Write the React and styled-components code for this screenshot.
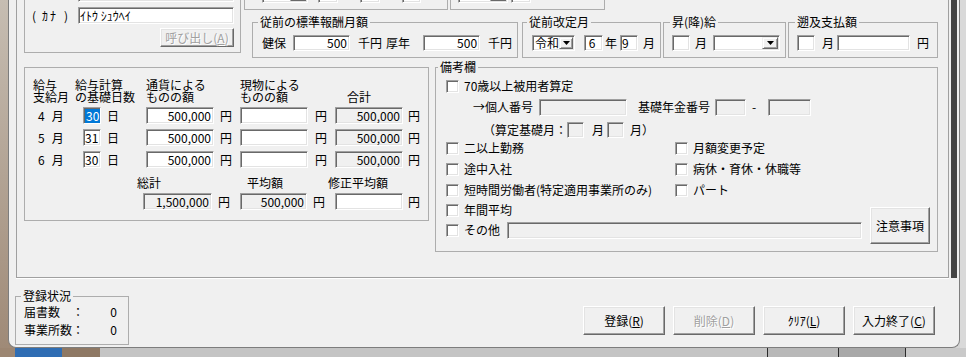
import React from "react";
import styled, { createGlobalStyle } from "styled-components";

const GlobalStyle = createGlobalStyle`
  html, body { margin: 0; padding: 0; }
  body {
    font-family: "Noto Sans CJK JP", "Noto Sans", sans-serif;
    font-size: 12px;
    color: #000;
    background: #d6d6d6;
    overflow: hidden;
  }
`;

const Screen = styled.div`
  width: 966px;
  height: 357px;
  overflow: hidden;
  display: flex;
  flex-direction: column;
`;
const Desk = styled.div`
  display: flex;
  height: 348px;
  flex-shrink: 0;
  background: linear-gradient(to right, #a08a76 0, #a08a76 480px, #d4d4d4 480px);
`;
const LeftDesk = styled.div`
  width: 8px;
  flex-shrink: 0;
  background: linear-gradient(to bottom, #c6bdb2, #9f8a77);
`;
const RightDesk = styled.div`
  flex: 1;
  background: #d9d9d9;
`;
const Taskbar = styled.div`
  display: flex;
  height: 9px;
`;
const Seg = styled.div`
  width: ${(p) => (p.$w ? p.$w + "px" : "auto")};
  flex: ${(p) => (p.$w ? "none" : "1")};
  background: ${(p) => p.$bg};
  border-left: ${(p) => (p.$line ? "1px solid #2a2a2a" : "none")};
`;

const Window = styled.div`
  box-sizing: border-box;
  width: 952px;
  height: 378px;
  margin-top: -30px;
  flex-shrink: 0;
  display: flex;
  flex-direction: column;
  background: #f0f0f0;
  border: 1px solid #7d7d7d;
  border-top: none;
  border-radius: 0 0 8px 8px;
  overflow: hidden;
`;
const Upper = styled.div`
  display: flex;
  height: 308px;
`;
const Panel = styled.div`
  box-sizing: border-box;
  margin-left: 7px;
  width: 933px;
  height: 308px;
  padding-left: 7px;
  border: 1px solid #a0a0a0;
  border-top: none;
  box-shadow: 0 1px 0 #fff;
  display: flex;
  flex-direction: column;
`;
const RightFrame = styled.div`
  width: 10px;
  display: flex;
`;
const DarkBar = styled.div`
  width: 6px;
  margin-left: 2px;
  background: #444;
`;

const GroupBox = styled.fieldset`
  box-sizing: border-box;
  margin: ${(p) => p.$mt || 0}px 0 0 ${(p) => p.$ml || 0}px;
  padding: 0;
  min-width: 0;
  width: ${(p) => p.$w}px;
  height: ${(p) => p.$h}px;
  border: 1px solid #adadad;
  flex-shrink: 0;
`;
const Legend = styled.legend`
  padding: 0 2px;
  margin-left: ${(p) => (p.$ml ?? 5)}px;
  font-size: 12px;
  line-height: 14px;
`;
const Body = styled.div`
  padding: ${(p) => p.$pad};
`;

const Row = styled.div`
  display: flex;
  align-items: center;
  justify-content: ${(p) => (p.$end ? "flex-end" : "flex-start")};
  height: ${(p) => (p.$h ? p.$h + "px" : "auto")};
  margin-top: ${(p) => p.$mt || 0}px;
  padding-left: ${(p) => p.$pl || 0}px;
  padding-right: ${(p) => (p.$end ? 1 : 0)}px;
`;
const Txt = styled.span`
  flex-shrink: 0;
  margin-left: ${(p) => p.$ml || 0}px;
  line-height: 14px;
  white-space: nowrap;
`;
const KanaLabel = styled.div`
  width: 36px;
  display: flex;
  justify-content: space-between;
  line-height: 14px;
  span:nth-child(2) { letter-spacing: 2px; }
`;

const Edit = styled.div`
  box-sizing: border-box;
  flex-shrink: 0;
  width: ${(p) => p.$w}px;
  height: ${(p) => p.$h || 17}px;
  margin-left: ${(p) => p.$ml || 0}px;
  padding: 0 2px 0 1px;
  border: 1px solid;
  border-color: #a0a0a0 #fff #fff #a0a0a0;
  box-shadow: inset 1px 1px 0 #696969, inset -1px -1px 0 #e3e3e3;
  background: ${(p) => (p.$ro ? "#f0f0f0" : "#fff")};
  display: flex;
  align-items: center;
  justify-content: ${(p) => (p.$right ? "flex-end" : "flex-start")};
  font-size: 12px;
  line-height: 12px;
  white-space: nowrap;
  overflow: hidden;
`;
const Combo = styled(Edit)`
  padding: 0 1px 0 2px;
  justify-content: space-between;
`;
const DropBtn = styled.div`
  box-sizing: border-box;
  width: 16px;
  height: ${(p) => p.$h || 13}px;
  border: 1px solid;
  border-color: #f0f0f0 #696969 #696969 #f0f0f0;
  box-shadow: inset 1px 1px 0 #fff, inset -1px -1px 0 #a0a0a0;
  background: #f0f0f0;
  display: flex;
  align-items: center;
  justify-content: center;
`;
const Sel = styled.span`
  background: #0078d7;
  color: #fff;
  padding: 1px 1px;
  border-right: 1px solid #000;
`;
const Box = styled.div`
  box-sizing: border-box;
  width: 13px;
  height: 13px;
  flex-shrink: 0;
  border: 1px solid;
  border-color: #a0a0a0 #fff #fff #a0a0a0;
  box-shadow: inset 1px 1px 0 #696969, inset -1px -1px 0 #e3e3e3;
  background: #fff;
`;
const Btn = styled.button`
  box-sizing: border-box;
  width: ${(p) => p.$w}px;
  height: ${(p) => p.$h}px;
  margin: ${(p) => p.$mt || 0}px 0 0 ${(p) => p.$ml || 0}px;
  padding: 0;
  flex-shrink: 0;
  border: 1px solid;
  border-color: #fff #696969 #696969 #fff;
  box-shadow: inset -1px -1px 0 #a0a0a0, inset 1px 1px 0 #e3e3e3;
  background: #f0f0f0;
  font-family: inherit;
  font-size: 12px;
  line-height: 14px;
  color: ${(p) => (p.$off ? "#a0a0a0" : "#000")};
  text-shadow: ${(p) => (p.$off ? "1px 1px 0 #fff" : "none")};
`;

const TopRow = styled.div`
  display: flex;
  align-items: flex-start;
  gap: 3px;
`;
const RightCol = styled.div`
  display: flex;
  flex-direction: column;
`;
const TopStrip = styled.div`
  display: flex;
  gap: 2px;
`;
const GroupsRow = styled.div`
  display: flex;
  margin-top: 5px;
`;
const MidRow = styled.div`
  display: flex;
  align-items: flex-start;
  margin-top: 2px;
`;

const SalaryGrid = styled.div`
  display: grid;
  grid-template-columns: 42px 71px 94px 95px 90px;
  align-items: center;
  height: ${(p) => p.$h}px;
  margin-top: ${(p) => p.$mt || 0}px;
`;
const Head = styled.div`
  line-height: 12px;
  padding-left: ${(p) => p.$pl || 0}px;
  align-self: end;
  white-space: nowrap;
`;
const Cell = styled.div`
  display: flex;
  align-items: center;
  padding-left: ${(p) => p.$pl || 0}px;
`;

const TwoCol = styled.div`
  display: grid;
  grid-template-columns: 229px auto;
  align-items: center;
  height: 18px;
  margin-top: ${(p) => p.$mt || 0}px;
`;
const CheckItem = styled.div`
  display: flex;
  align-items: center;
  height: 18px;
`;
const Tail = styled.div`
  display: flex;
  align-items: flex-start;
`;

const Footer = styled.div`
  display: flex;
  align-items: flex-start;
`;
const StatGrid = styled.div`
  display: grid;
  grid-template-columns: 48px 12px 33px;
  grid-auto-rows: 18px;
  align-items: center;
  padding-left: 8px;
  line-height: 14px;
  span:nth-child(3n) { text-align: right; }
`;
const ButtonBar = styled.div`
  display: flex;
  gap: 8px;
  margin: 28px 24px 0 auto;
`;

const Tri = () => (
  <svg width="7" height="4" viewBox="0 0 7 4">
    <path d="M0 0h7L3.5 4z" fill="#000" />
  </svg>
);

const Select = ({ w, ml, h, children }) => (
  <Combo $w={w} $ml={ml} $h={h}>
    <span>{children}</span>
    <DropBtn $h={h ? h - 4 : 13}>
      <Tri />
    </DropBtn>
  </Combo>
);

const Check = ({ children }) => (
  <CheckItem>
    <Box />
    <Txt $ml={5}>{children}</Txt>
  </CheckItem>
);

const salaryRows = [
  { m: 4, d: "30", sel: true },
  { m: 5, d: "31" },
  { m: 6, d: "30" },
];

export default function App() {
  return (
    <>
      <GlobalStyle />
      <Screen>
        <Desk>
          <LeftDesk />
          <Window>
            <Upper>
              <Panel>
                <TopRow>
                  <GroupBox $w={217} $h={83}>
                    <Body $pad="14px 5px 0 7px">
                      <Row $h={17}>
                        <Edit $w={156} $ml={46} />
                      </Row>
                      <Row $h={17} $mt={5}>
                        <KanaLabel>
                          <span>(</span>
                          <span>ｶﾅ</span>
                          <span>)</span>
                        </KanaLabel>
                        <Edit $w={156} $ml={10}>ｲﾄｳ ｼｭｳﾍｲ</Edit>
                      </Row>
                      <Row $mt={4} $end>
                        <Btn $w={74} $h={19} $off disabled>
                          呼び出し(<u>A</u>)
                        </Btn>
                      </Row>
                    </Body>
                  </GroupBox>

                  <RightCol>
                    <TopStrip>
                      <GroupBox $w={204} $h={40}>
                        <Body $pad="15px 0 0 17px">
                          <Row $h={17}>
                            <Select w={46} />
                            <Edit $w={20} $ml={10} />
                            <Edit $w={20} $ml={22} />
                            <Edit $w={19} $ml={22} />
                          </Row>
                        </Body>
                      </GroupBox>
                      <GroupBox $w={155} $h={40}>
                        <Body $pad="15px 0 0 7px">
                          <Row $h={17}>
                            <Select w={50} />
                            <Edit $w={20} $ml={3} />
                          </Row>
                        </Body>
                      </GroupBox>
                    </TopStrip>

                    <GroupsRow>
                      <GroupBox $w={266} $h={43} $ml={8}>
                        <Legend $ml={5}>従前の標準報酬月額</Legend>
                        <Body $pad="6px 0 0 9px">
                          <Row $h={16}>
                            <Txt>健保</Txt>
                            <Edit $w={57} $h={16} $ml={7} $right>500</Edit>
                            <Txt $ml={8}>千円</Txt>
                            <Txt $ml={4}>厚年</Txt>
                            <Edit $w={57} $h={16} $ml={13} $right>500</Edit>
                            <Txt $ml={8}>千円</Txt>
                          </Row>
                        </Body>
                      </GroupBox>
                      <GroupBox $w={139} $h={43} $ml={4}>
                        <Legend $ml={4}>従前改定月</Legend>
                        <Body $pad="6px 0 0 9px">
                          <Row $h={16}>
                            <Select w={43} h={16}>令和</Select>
                            <Edit $w={19} $h={16} $ml={9}>&nbsp;6</Edit>
                            <Txt $ml={2}>年</Txt>
                            <Edit $w={18} $h={16} $ml={3}>9</Edit>
                            <Txt $ml={5}>月</Txt>
                          </Row>
                        </Body>
                      </GroupBox>
                      <GroupBox $w={123} $h={43} $ml={2}>
                        <Legend $ml={6}>昇(降)給</Legend>
                        <Body $pad="6px 0 0 8px">
                          <Row $h={16}>
                            <Edit $w={18} $h={16} />
                            <Txt $ml={5}>月</Txt>
                            <Select w={67} h={16} ml={6} />
                          </Row>
                        </Body>
                      </GroupBox>
                      <GroupBox $w={150} $h={43} $ml={2}>
                        <Legend $ml={6}>遡及支払額</Legend>
                        <Body $pad="6px 0 0 8px">
                          <Row $h={16}>
                            <Edit $w={18} $h={16} />
                            <Txt $ml={7}>月</Txt>
                            <Edit $w={73} $h={16} $ml={3} />
                            <Txt $ml={7}>円</Txt>
                          </Row>
                        </Body>
                      </GroupBox>
                    </GroupsRow>
                  </RightCol>
                </TopRow>

                <MidRow>
                  <GroupBox $w={405} $h={154} $mt={7}>
                    <Body $pad="11px 0 0 8px">
                      <SalaryGrid $h={24}>
                        <Head>給与<br />支給月</Head>
                        <Head>給与計算<br />の基礎日数</Head>
                        <Head>通貨による<br />ものの額</Head>
                        <Head>現物による<br />ものの額</Head>
                        <Head $pl={12}>合計</Head>
                      </SalaryGrid>
                      {salaryRows.map((r, i) => (
                        <SalaryGrid key={r.m} $h={17} $mt={i === 0 ? 4 : 5}>
                          <Cell $pl={5}>
                            <Txt>{r.m}</Txt>
                            <Txt $ml={7}>月</Txt>
                          </Cell>
                          <Cell $pl={8}>
                            <Edit $w={18}>{r.sel ? <Sel>{r.d}</Sel> : r.d}</Edit>
                            <Txt $ml={6}>日</Txt>
                          </Cell>
                          <Cell>
                            <Edit $w={68} $right>500,000</Edit>
                            <Txt $ml={6}>円</Txt>
                          </Cell>
                          <Cell>
                            <Edit $w={68} />
                            <Txt $ml={7}>円</Txt>
                          </Cell>
                          <Cell>
                            <Edit $w={68} $ro $right>500,000</Edit>
                            <Txt $ml={5}>円</Txt>
                          </Cell>
                        </SalaryGrid>
                      ))}
                      <Row $h={14} $mt={8}>
                        <Txt $ml={104}>総計</Txt>
                        <Txt $ml={86}>平均額</Txt>
                        <Txt $ml={45}>修正平均額</Txt>
                      </Row>
                      <Row $h={17} $mt={3}>
                        <Edit $w={69} $ml={110} $ro $right>1,500,000</Edit>
                        <Txt $ml={6}>円</Txt>
                        <Edit $w={67} $ml={10} $ro $right>500,000</Edit>
                        <Txt $ml={6}>円</Txt>
                        <Edit $w={68} $ml={10} />
                        <Txt $ml={5}>円</Txt>
                      </Row>
                    </Body>
                  </GroupBox>

                  <GroupBox $w={503} $h={192} $ml={6}>
                    <Legend $ml={2}>備考欄</Legend>
                    <Body $pad="3px 7px 0 10px">
                      <Check>70歳以上被用者算定</Check>
                      <Row $h={18} $mt={3} $pl={27}>
                        <Txt>→個人番号</Txt>
                        <Edit $w={88} $ml={6} $ro />
                        <Txt $ml={11}>基礎年金番号</Txt>
                        <Edit $w={31} $ml={5} $ro />
                        <Txt $ml={6}>-</Txt>
                        <Edit $w={43} $ml={12} $ro />
                      </Row>
                      <Row $h={18} $mt={5} $pl={37}>
                        <Txt>（算定基礎月：</Txt>
                        <Edit $w={17} $h={16} $ro />
                        <Txt $ml={8}>月</Txt>
                        <Edit $w={17} $h={16} $ml={3} $ro />
                        <Txt $ml={6}>月）</Txt>
                      </Row>
                      <TwoCol>
                        <Check>二以上勤務</Check>
                        <Check>月額変更予定</Check>
                      </TwoCol>
                      <TwoCol $mt={3}>
                        <Check>途中入社</Check>
                        <Check>病休・育休・休職等</Check>
                      </TwoCol>
                      <TwoCol $mt={3}>
                        <Check>短時間労働者(特定適用事業所のみ)</Check>
                        <Check>パート</Check>
                      </TwoCol>
                      <Tail>
                        <div>
                          <Row $h={18} $mt={2}>
                            <Box />
                            <Txt $ml={5}>年間平均</Txt>
                          </Row>
                          <Row $h={18} $mt={2}>
                            <Box />
                            <Txt $ml={5}>その他</Txt>
                            <Edit $w={355} $ml={7} $ro />
                          </Row>
                        </div>
                        <Btn $w={60} $h={37} $ml={8} $mt={8}>注意事項</Btn>
                      </Tail>
                    </Body>
                  </GroupBox>
                </MidRow>
              </Panel>
              <RightFrame>
                <DarkBar />
              </RightFrame>
            </Upper>

            <Footer>
              <GroupBox $w={114} $h={56} $ml={6} $mt={11}>
                <Legend $ml={5}>登録状況</Legend>
                <StatGrid>
                  <span>届書数</span>
                  <span>：</span>
                  <span>0</span>
                  <span>事業所数</span>
                  <span>：</span>
                  <span>0</span>
                </StatGrid>
              </GroupBox>
              <ButtonBar>
                <Btn $w={82} $h={29}>登録(<u>R</u>)</Btn>
                <Btn $w={82} $h={29} $off disabled>削除(<u>D</u>)</Btn>
                <Btn $w={82} $h={29}>ｸﾘｱ(<u>L</u>)</Btn>
                <Btn $w={82} $h={29}>入力終了(<u>C</u>)</Btn>
              </ButtonBar>
            </Footer>
          </Window>
          <RightDesk />
        </Desk>
        <Taskbar>
          <Seg $w={15} $bg="#9c8672" />
          <Seg $w={47} $bg="#2f6db3" />
          <Seg $w={38} $bg="#8e7864" />
          <Seg $w={667} $bg="#c4c4c4" />
          <Seg $w={70} $bg="#b8b8b8" $line />
          <Seg $w={66} $bg="#a8a8a8" $line />
          <Seg $bg="#c9c9c9" $line />
        </Taskbar>
      </Screen>
    </>
  );
}
